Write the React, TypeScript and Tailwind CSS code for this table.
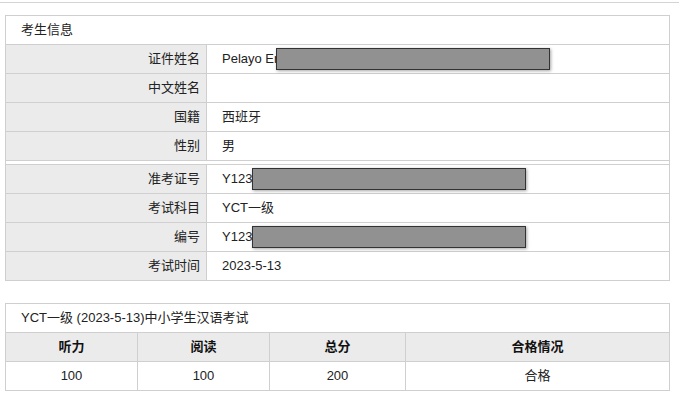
const Redacted = ({ width, className = "" }: { width: number; className?: string }) => (
  <span
    className={`inline-block h-[22px] align-middle bg-[#919191] border border-[#333] shadow-[1px_1px_3px_rgba(0,0,0,0.35)] ${className}`}
    style={{ width }}
  />
);

const Row = ({ label, children }: { label: string; children?: React.ReactNode }) => (
  <div className="grid grid-cols-[201px_1fr] h-[29px] border-b border-[#cfcfcf]">
    <div className="bg-[#ebebeb] border-r border-[#cfcfcf] flex items-center justify-end pr-[6px]">{label}</div>
    <div className="flex items-center pl-[15px] whitespace-nowrap">{children}</div>
  </div>
);

const App = () => {
  return (
    <div className="w-[679px] h-[414px] bg-white text-[13px] text-[#222] font-['Liberation_Sans','Noto_Sans_CJK_SC',sans-serif]">
      <div className="h-[3px] border-b border-[#d4d4d4]" />
      <div className="pl-[5px] pt-[12px] w-[670px]">
        <div className="border border-[#cfcfcf]">
          <div className="h-[29px] border-b border-[#cfcfcf] flex items-center pl-[15px]">考生信息</div>
          <Row label="证件姓名">
            <span>Pelayo Er</span>
            <Redacted width={274} className="-ml-[2px]" />
          </Row>
          <Row label="中文姓名" />
          <Row label="国籍">西班牙</Row>
          <Row label="性别">男</Row>
          <div className="h-[3px]" />
          <div className="border-t border-[#cfcfcf]">
            <Row label="准考证号">
              <span>Y123</span>
              <Redacted width={274} />
            </Row>
            <Row label="考试科目">YCT一级</Row>
            <Row label="编号">
              <span>Y123</span>
              <Redacted width={274} />
            </Row>
            <div className="grid grid-cols-[201px_1fr] h-[28px]">
              <div className="bg-[#ebebeb] border-r border-[#cfcfcf] flex items-center justify-end pr-[6px]">考试时间</div>
              <div className="flex items-center pl-[15px]">2023-5-13</div>
            </div>
          </div>
        </div>

        <div className="mt-[22px] border border-[#cfcfcf]">
          <div className="h-[29px] border-b border-[#cfcfcf] flex items-center pl-[15px]">YCT一级 (2023-5-13)中小学生汉语考试</div>
          <div className="grid grid-cols-[132px_132px_136px_1fr] h-[29px] border-b border-[#cfcfcf] bg-[#ebebeb] font-bold text-[#111]">
            <div className="border-r border-[#cfcfcf] flex items-center justify-center">听力</div>
            <div className="border-r border-[#cfcfcf] flex items-center justify-center">阅读</div>
            <div className="border-r border-[#cfcfcf] flex items-center justify-center">总分</div>
            <div className="flex items-center justify-center">合格情况</div>
          </div>
          <div className="grid grid-cols-[132px_132px_136px_1fr] h-[28px]">
            <div className="border-r border-[#cfcfcf] flex items-center justify-center">100</div>
            <div className="border-r border-[#cfcfcf] flex items-center justify-center">100</div>
            <div className="border-r border-[#cfcfcf] flex items-center justify-center">200</div>
            <div className="flex items-center justify-center">合格</div>
          </div>
        </div>
      </div>
    </div>
  );
};

export default App;
